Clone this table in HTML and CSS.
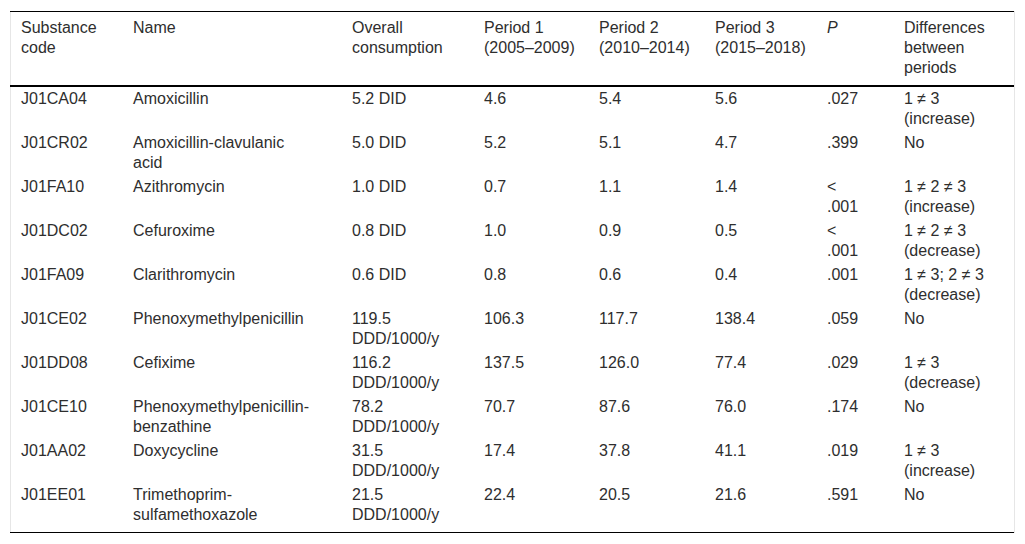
FILE: index.html
```html
<!DOCTYPE html>
<html lang="en">
<head>
<meta charset="utf-8">
<title>Antibiotic consumption</title>
<link rel="stylesheet" href="styles.css">
</head>
<body>
<div class="frame">
<table class="data">
<colgroup>
<col class="c-code"><col class="c-name"><col class="c-overall"><col class="c-p1"><col class="c-p2"><col class="c-p3"><col class="c-p"><col class="c-diff">
</colgroup>
<thead>
<tr>
<th>Substance code</th>
<th class="name">Name</th>
<th>Overall consumption</th>
<th>Period 1 (2005–2009)</th>
<th>Period 2 (2010–2014)</th>
<th>Period 3 (2015–2018)</th>
<th class="pv"><i>P</i></th>
<th>Differences between periods</th>
</tr>
</thead>
<tbody>
<tr><td>J01CA04</td><td class="name">Amoxicillin</td><td>5.2 DID</td><td>4.6</td><td>5.4</td><td>5.6</td><td class="pv">.027</td><td>1 ≠ 3 (increase)</td></tr>
<tr><td>J01CR02</td><td class="name">Amoxicillin-clavulanic acid</td><td>5.0 DID</td><td>5.2</td><td>5.1</td><td>4.7</td><td class="pv">.399</td><td>No</td></tr>
<tr><td>J01FA10</td><td class="name">Azithromycin</td><td>1.0 DID</td><td>0.7</td><td>1.1</td><td>1.4</td><td class="pv">&lt; .001</td><td>1 ≠ 2 ≠ 3 (increase)</td></tr>
<tr><td>J01DC02</td><td class="name">Cefuroxime</td><td>0.8 DID</td><td>1.0</td><td>0.9</td><td>0.5</td><td class="pv">&lt; .001</td><td>1 ≠ 2 ≠ 3 (decrease)</td></tr>
<tr><td>J01FA09</td><td class="name">Clarithromycin</td><td>0.6 DID</td><td>0.8</td><td>0.6</td><td>0.4</td><td class="pv">.001</td><td>1 ≠ 3; 2 ≠ 3 (decrease)</td></tr>
<tr><td>J01CE02</td><td class="name">Phenoxymethylpenicillin</td><td>119.5 DDD/1000/y</td><td>106.3</td><td>117.7</td><td>138.4</td><td class="pv">.059</td><td>No</td></tr>
<tr><td>J01DD08</td><td class="name">Cefixime</td><td>116.2 DDD/1000/y</td><td>137.5</td><td>126.0</td><td>77.4</td><td class="pv">.029</td><td>1 ≠ 3 (decrease)</td></tr>
<tr><td>J01CE10</td><td class="name">Phenoxymethylpenicillin-benzathine</td><td>78.2 DDD/1000/y</td><td>70.7</td><td>87.6</td><td>76.0</td><td class="pv">.174</td><td>No</td></tr>
<tr><td>J01AA02</td><td class="name">Doxycycline</td><td>31.5 DDD/1000/y</td><td>17.4</td><td>37.8</td><td>41.1</td><td class="pv">.019</td><td>1 ≠ 3 (increase)</td></tr>
<tr><td>J01EE01</td><td class="name">Trimethoprim-sulfamethoxazole</td><td>21.5 DDD/1000/y</td><td>22.4</td><td>20.5</td><td>21.6</td><td class="pv">.591</td><td>No</td></tr>
</tbody>
</table>
</div>
</body>
</html>
```
FILE: styles.css
```css
html, body {
  margin: 0;
  padding: 0;
  background: #ffffff;
}

body {
  font-family: "Liberation Sans", Arial, Helvetica, sans-serif;
  font-size: 16px;
  line-height: 20px;
  color: #2e2e2e;
}

.frame {
  margin: 11px 0 0 10px;
  width: 1003px;
  border-left: 1px solid #e6e6e6;
  border-right: 1px solid #e6e6e6;
}

.data {
  width: 1004px;
  margin-left: -1px;
  table-layout: fixed;
  border-collapse: separate;
  border-spacing: 0;
  border-top: 1px solid #000000;
  border-bottom: 1px solid #000000;
}

.c-code { width: 112px; }
.c-name { width: 219px; }
.c-overall { width: 132px; }
.c-p1 { width: 115px; }
.c-p2 { width: 116px; }
.c-p3 { width: 112px; }
.c-p { width: 77px; }
.c-diff { width: 121px; }

.data th,
.data td {
  text-align: left;
  vertical-align: top;
  font-weight: normal;
  padding: 2px 8px 2px 11px;
}

.data thead th {
  padding-top: 6px;
  padding-bottom: 7px;
  border-bottom: 2px solid #000000;
}

.data .name {
  padding-right: 28px;
}

.data .pv {
  padding-right: 24px;
}

.data tbody tr:last-child td {
  padding-bottom: 7px;
}
```
